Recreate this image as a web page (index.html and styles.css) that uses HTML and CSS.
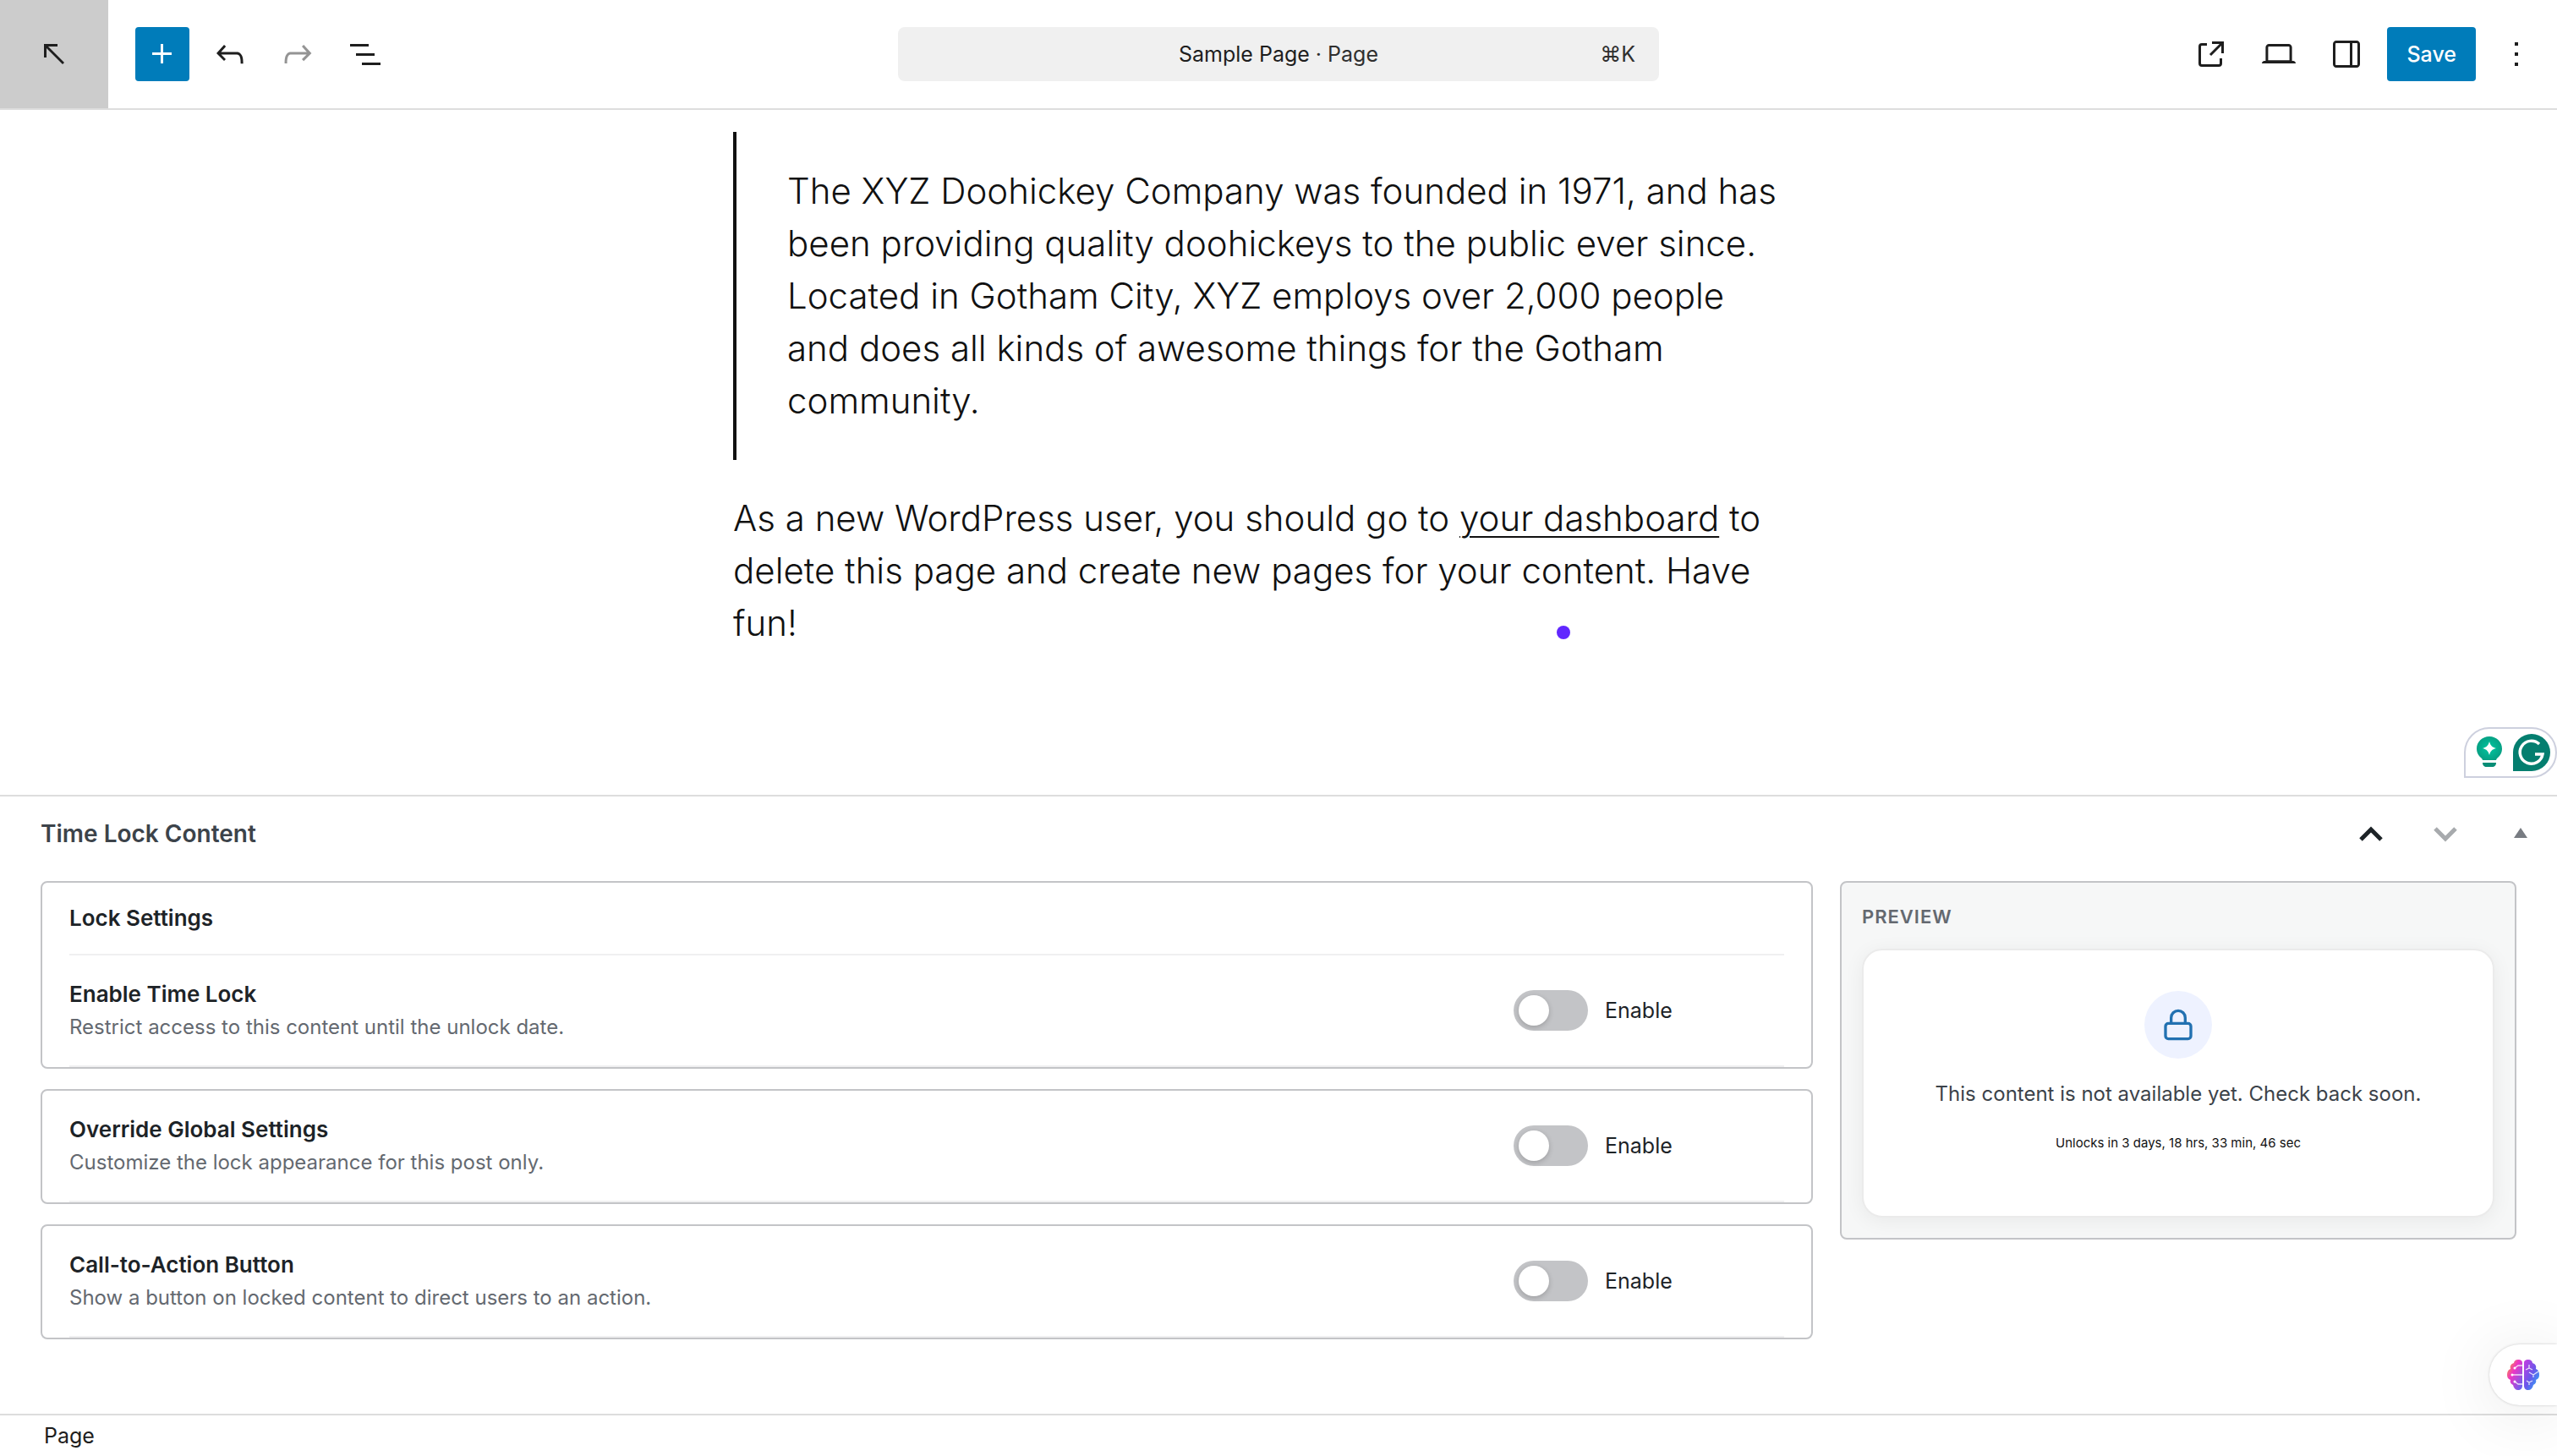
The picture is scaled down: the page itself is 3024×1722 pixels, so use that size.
FILE: index.html
```
<!DOCTYPE html>
<html lang="en">
<head>
  <meta charset="UTF-8">
  <meta name="viewport" content="width=device-width, initial-scale=1">
  <title>Sample Page - Edit Page</title>
  <link rel="stylesheet" href="styles.css">
</head>
<body>
  <!-- Top toolbar -->
  <header class="editor-header">
    <div class="header-left">
      <a href="#" class="back-link" aria-label="View Pages">
        <svg class="icon" viewBox="0 0 24 24"><path d="M14 6H6v8h1.5V8.5L17 18l1-1-9.5-9.5H14V6Z"/></svg>
      </a>
      <div class="tools">
        <button type="button" class="icon-btn inserter" aria-label="Block Inserter">
          <svg class="icon" viewBox="0 0 24 24"><path d="M11 12.5V17.5H12.5V12.5H17.5V11H12.5V6H11V11H6V12.5H11Z"/></svg>
        </button>
        <button type="button" class="icon-btn" aria-label="Undo">
          <svg class="icon" viewBox="0 0 24 24"><path d="M18.3 11.7c-.6-.6-1.4-.9-2.3-.9H6.7l2.9-3.3-1.1-1-4.5 5L8.5 16l1-1-2.7-2.7H16c.5 0 .9.2 1.3.5 1 1 1 3.4 1 4.5v.3h1.5v-.2c0-1.5 0-4.3-1.5-5.7z"/></svg>
        </button>
        <button type="button" class="icon-btn" aria-label="Redo" disabled>
          <svg class="icon" viewBox="0 0 24 24"><path d="M15.6 6.5l-1.1 1 2.9 3.3H8c-.9 0-1.7.3-2.3.9-1.4 1.5-1.4 4.2-1.4 5.6v.2h1.5v-.3c0-1.1 0-3.5 1-4.5.3-.3.7-.5 1.3-.5h9.2L14.5 15l1.1 1.1 4.6-4.6-4.6-5z"/></svg>
        </button>
        <button type="button" class="icon-btn" aria-label="Document Overview">
          <svg class="icon" viewBox="0 0 24 24"><path d="M3 6h11v1.5H3V6Zm3.5 5.5h11V13h-11v-1.5ZM21 17H10v1.5h11V17Z"/></svg>
        </button>
      </div>
    </div>

    <button type="button" class="document-bar">
      <span class="document-title">Sample Page <span class="document-type">· Page</span></span>
      <span class="document-shortcut">⌘K</span>
    </button>

    <div class="header-right">
      <a href="#" class="icon-btn" aria-label="View Page">
        <svg class="icon" viewBox="0 0 24 24"><path d="M19.5 4.5h-7V6h4.44l-5.97 5.97 1.06 1.06L18 7.06v4.44h1.5v-7Zm-13 1a2 2 0 0 0-2 2v10a2 2 0 0 0 2 2h10a2 2 0 0 0 2-2v-3H17v3a.5.5 0 0 1-.5.5h-10a.5.5 0 0 1-.5-.5v-10a.5.5 0 0 1 .5-.5h3V5.5h-3Z"/></svg>
      </a>
      <button type="button" class="icon-btn" aria-label="View">
        <svg class="icon" viewBox="0 0 24 24"><path d="M20.5 16h-.7V8c0-1.1-.9-2-2-2H6.2c-1.1 0-2 .9-2 2v8h-.7c-.8 0-1.5.7-1.5 1.5h20c0-.8-.7-1.5-1.5-1.5zM5.7 8c0-.3.2-.5.5-.5h11.6c.3 0 .5.2.5.5v7.6H5.7V8z"/></svg>
      </button>
      <button type="button" class="icon-btn" aria-label="Settings">
        <svg class="icon" viewBox="0 0 24 24"><path d="M18 4H6c-1.1 0-2 .9-2 2v12c0 1.1.9 2 2 2h12c1.1 0 2-.9 2-2V6c0-1.1-.9-2-2-2zm-4 14.5H6c-.3 0-.5-.2-.5-.5V6c0-.3.2-.5.5-.5h8v13zm4.5-.5c0 .3-.2.5-.5.5h-2.5v-13H18c.3 0 .5.2.5.5v12z"/></svg>
      </button>
      <button type="button" class="save-btn">Save</button>
      <button type="button" class="icon-btn" aria-label="Options">
        <svg class="icon" viewBox="0 0 24 24"><path d="M13 19h-2v-2h2v2zm0-6h-2v-2h2v2zm0-6h-2V5h2v2z"/></svg>
      </button>
    </div>
  </header>

  <!-- Editor canvas -->
  <main class="canvas">
    <article class="post-content">
      <blockquote class="quote">
        The XYZ Doohickey Company was founded in 1971, and has<br>
        been providing quality doohickeys to the public ever since.<br>
        Located in Gotham City, XYZ employs over 2,000 people<br>
        and does all kinds of awesome things for the Gotham<br>
        community.
      </blockquote>
      <p class="paragraph">
        As a new WordPress user, you should go to <a href="#">your dashboard</a> to<br>
        delete this page and create new pages for your content. Have<br>
        fun!
      </p>
      <span class="cursor-dot"></span>
    </article>

    <div class="writing-helper">
      <svg class="helper-bulb" viewBox="0 0 36 40">
        <defs>
          <radialGradient id="bulb" cx="50%" cy="50%" r="50%">
            <stop offset="0" stop-color="#00c6a0"/>
            <stop offset="1" stop-color="#06a184"/>
          </radialGradient>
        </defs>
        <path d="M18 1C9.500 1 3 7.500 3 15.500c0 5 2.500 8.500 5.500 11 1 .8 1.500 2.500 1.500 2.500h16s.5-1.700 1.500-2.500c3-2.500 5.500-6 5.500-11C33 7.500 26.500 1 18 1z" fill="url(#bulb)"/>
        <path d="M18 7c1.500 5 3 6.500 8 8-5 1.500-6.500 3-8 8-1.500-5-3-6.500-8-8 5-1.500 6.500-3 8-8z" fill="#fff"/>
        <path d="M10 32h16c0 3.500-2 5-4.500 5h-7c-2.500 0-4.500-1.500-4.500-5z" fill="#078d76"/>
      </svg>
      <svg class="helper-logo" viewBox="0 0 44 44">
        <path d="M22 0a22 22 0 0 1 0 44H0V22A22 22 0 0 1 22 0z" fill="#047e6f"/>
        <path d="M31 12A13.500 13.500 0 1 0 35 24H26" fill="none" stroke="#fff" stroke-width="3.500"/>
      </svg>
    </div>
  </main>

  <!-- Time Lock meta box -->
  <section class="metabox">
    <div class="metabox-header">
      <h2>Time Lock Content</h2>
      <div class="metabox-actions">
        <button type="button" aria-label="Move up">
          <svg class="chevron" viewBox="0 0 32 32"><path d="M4 23 16 11l12 12"/></svg>
        </button>
        <button type="button" aria-label="Move down" disabled>
          <svg class="chevron" viewBox="0 0 32 32"><path d="M4 10l12 12 12-12"/></svg>
        </button>
        <button type="button" aria-label="Toggle panel">
          <svg class="triangle" viewBox="0 0 32 32"><path d="M9 21 17 9l8 12z"/></svg>
        </button>
      </div>
    </div>

    <div class="metabox-body">
      <div class="settings">
        <div class="card">
          <h3 class="card-title">Lock Settings</h3>
          <div class="setting-row">
            <div class="setting-text">
              <h4>Enable Time Lock</h4>
              <p>Restrict access to this content until the unlock date.</p>
            </div>
            <label class="setting-control">
              <input type="checkbox" class="toggle">
              Enable
            </label>
          </div>
        </div>

        <div class="card">
          <div class="setting-row">
            <div class="setting-text">
              <h4>Override Global Settings</h4>
              <p>Customize the lock appearance for this post only.</p>
            </div>
            <label class="setting-control">
              <input type="checkbox" class="toggle">
              Enable
            </label>
          </div>
        </div>

        <div class="card">
          <div class="setting-row">
            <div class="setting-text">
              <h4>Call-to-Action Button</h4>
              <p>Show a button on locked content to direct users to an action.</p>
            </div>
            <label class="setting-control">
              <input type="checkbox" class="toggle">
              Enable
            </label>
          </div>
        </div>
      </div>

      <aside class="preview">
        <h3>PREVIEW</h3>
        <div class="preview-card">
          <div class="lock-badge">
            <svg viewBox="0 0 24 24"><rect x="3" y="11" width="18" height="11" rx="2"/><path d="M7 11V7a5 5 0 0 1 10 0v4"/></svg>
          </div>
          <p class="preview-message">This content is not available yet. Check back soon.</p>
          <p class="preview-countdown">Unlocks in 3 days, 18 hrs, 33 min, 46 sec</p>
        </div>
      </aside>
    </div>
  </section>

  <footer class="editor-footer">Page</footer>

  <button type="button" class="assistant" aria-label="Open assistant">
    <svg viewBox="0 0 38 36">
      <defs>
        <linearGradient id="brain-left" x1="0" y1="0" x2="1" y2="1">
          <stop offset="0" stop-color="#f9b016"/>
          <stop offset="0.400" stop-color="#ee35c4"/>
          <stop offset="1" stop-color="#5a66f5"/>
        </linearGradient>
        <linearGradient id="brain-right" x1="0" y1="0" x2="1" y2="1">
          <stop offset="0" stop-color="#c93be0"/>
          <stop offset="0.500" stop-color="#6a57ea"/>
          <stop offset="1" stop-color="#22b8fa"/>
        </linearGradient>
      </defs>
      <path d="M18 4c0-3-2-4-5-4S8 2 8 4C5 5 3 7 4 11c-3 1-4 4-4 7s1 5 4 6c-1 3 1 5 3 6 1 4 3 6 6 6s5-2 5-5z" fill="url(#brain-left)"/>
      <path d="M20 4c0-3 2-4 5-4s5 2 5 4c3 1 5 3 4 7 3 1 4 4 4 7s-1 5-4 6c1 3-1 5-3 6-1 4-3 6-6 6s-5-2-5-5z" fill="url(#brain-right)"/>
      <g fill="none" stroke="#fff" stroke-opacity="0.800" stroke-width="1.300">
        <path d="M18 7h-5l-4 3M18 18H6M18 29h-5l-4-3M26 6v4l-4 2M26 10l4 2M26 15l5 3 6-4M31 17v4M23 25l3 2 4-2M26 27v3"/>
      </g>
      <g fill="#fff"><circle cx="9" cy="10" r="1.500"/><circle cx="6" cy="18" r="1.500"/><circle cx="9" cy="26" r="1.500"/></g>
    </svg>
  </button>
</body>
</html>
```

FILE: styles.css
```
* {
  box-sizing: border-box;
}
body {
  position: relative;
  display: flex;
  flex-direction: column;
  min-height: 100vh;
  margin: 0;
  overflow-x: hidden;
  background: #fff;
  color: #1e1e1e;
  font-family: Inter, "Liberation Sans", sans-serif;
  font-size: 25px;
}
h2, h3, h4, p, blockquote {
  margin: 0;
}
button {
  padding: 0;
  border: none;
  background: none;
  color: inherit;
  font: inherit;
  cursor: pointer;
}

/* Header */
.editor-header {
  display: grid;
  grid-template-columns: 1fr minmax(0, 900px) 1fr;
  align-items: center;
  height: 130px;
  border-bottom: 2px solid #ddd;
}
.header-left {
  display: flex;
  align-items: center;
  gap: 32px;
}
.back-link {
  display: flex;
  align-items: center;
  justify-content: center;
  width: 128px;
  height: 128px;
  background: #ccc;
  color: #1e1e1e;
}
.tools {
  display: flex;
  gap: 16px;
}
.icon {
  width: 48px;
  height: 48px;
  fill: currentColor;
}
.icon-btn {
  display: flex;
  align-items: center;
  justify-content: center;
  width: 64px;
  height: 64px;
  border-radius: 4px;
  color: #1e1e1e;
}
.icon-btn:disabled {
  color: #949494;
}
.inserter {
  background: #007cba;
  color: #fff;
}
.document-bar {
  display: grid;
  grid-template-columns: 1fr auto 1fr;
  align-items: center;
  height: 64px;
  padding: 0 28px;
  border-radius: 8px;
  background: #f0f0f0;
}
.document-title {
  grid-column: 2;
}
.document-type {
  color: #2f2f2f;
}
.document-shortcut {
  justify-self: end;
  color: #2f2f2f;
}
.header-right {
  display: flex;
  align-items: center;
  justify-content: flex-end;
  gap: 16px;
  padding-right: 16px;
}
.save-btn {
  height: 64px;
  padding: 0 23px;
  border-radius: 4px;
  background: #007cba;
  color: #fff;
  font-weight: 500;
}

/* Canvas */
.canvas {
  position: relative;
  flex: 1;
  padding: 26px 0 148px;
}
.post-content {
  position: relative;
  max-width: 1290px;
  margin: 0 auto;
  color: #111;
  font-size: 42px;
  font-weight: 300;
  line-height: 62px;
}
.quote {
  padding: 39px 0 39px 60px;
  border-left: 4px solid #111;
}
.paragraph {
  margin-top: 38px;
}
.paragraph a {
  color: inherit;
  text-decoration-thickness: 2px;
  text-underline-offset: 6px;
}
.cursor-dot {
  position: absolute;
  right: 300px;
  bottom: 12px;
  width: 16px;
  height: 16px;
  border-radius: 50%;
  background: #6127ff;
}
.writing-helper {
  position: absolute;
  right: 0;
  bottom: 20px;
  display: flex;
  align-items: center;
  gap: 10px;
  height: 60px;
  padding: 0 6px 0 10px;
  border: 2px solid #cdd0de;
  border-radius: 30px 30px 30px 0;
  background: #fff;
}
.helper-bulb {
  width: 36px;
  height: 40px;
}
.helper-logo {
  width: 44px;
  height: 44px;
}

/* Meta box */
.metabox {
  padding: 0 48px 88px;
  border-top: 2px solid #ddd;
}
.metabox-header {
  display: flex;
  align-items: center;
  justify-content: space-between;
  height: 88px;
  margin-bottom: 12px;
}
.metabox-header h2 {
  color: #3c434a;
  font-size: 28px;
  font-weight: 600;
}
.metabox-actions {
  display: flex;
  gap: 56px;
  margin-right: -20px;
}
.metabox-actions button {
  display: flex;
  color: #1d2327;
}
.metabox-actions button:disabled {
  color: #a7aaad;
}
.chevron, .triangle {
  width: 32px;
  height: 32px;
}
.chevron {
  fill: none;
  stroke: currentColor;
  stroke-width: 5;
}
.triangle {
  fill: #787c82;
}
.metabox-body {
  display: grid;
  grid-template-columns: 1fr 800px;
  align-items: start;
  gap: 32px;
}
.settings {
  display: grid;
  gap: 24px;
}
.card {
  padding: 0 32px;
  border: 2px solid #c3c4c7;
  border-radius: 8px;
  color: #1d2327;
}
.card-title {
  border-bottom: 2px solid #f0f0f1;
  font-size: 26px;
  font-weight: 600;
  line-height: 84px;
}
.setting-row {
  display: flex;
  align-items: center;
  justify-content: space-between;
  padding: 26px 0;
  border-bottom: 2px solid #f0f0f1;
}
.setting-text h4 {
  font-size: 26px;
  font-weight: 600;
  line-height: 40px;
}
.setting-text p {
  color: #646970;
  font-size: 24px;
  line-height: 38px;
}
.setting-control {
  display: flex;
  align-items: center;
  gap: 20px;
  width: 320px;
  cursor: pointer;
}
.toggle {
  display: flex;
  align-items: center;
  width: 88px;
  height: 48px;
  margin: 0;
  padding: 6px;
  border-radius: 24px;
  background: #c3c4c7;
  appearance: none;
}
.toggle::before {
  content: "";
  width: 36px;
  height: 36px;
  border-radius: 50%;
  background: #fff;
  box-shadow: 0 2px 6px rgba(0, 0, 0, 0.2);
}
.toggle:checked {
  justify-content: flex-end;
  background: #2271b1;
}

/* Preview */
.preview {
  padding: 24px;
  border: 2px solid #c3c4c7;
  border-radius: 8px;
  background: #f6f7f7;
}
.preview h3 {
  margin-bottom: 22px;
  color: #646970;
  font-size: 22px;
  font-weight: 600;
  letter-spacing: 1px;
  line-height: 32px;
}
.preview-card {
  display: flex;
  flex-direction: column;
  align-items: center;
  padding: 48px 48px 74px;
  border: 2px solid #ebebeb;
  border-radius: 24px;
  background: #fff;
  box-shadow: 0 4px 24px rgba(0, 0, 0, 0.06);
  text-align: center;
}
.lock-badge {
  display: flex;
  align-items: center;
  justify-content: center;
  width: 80px;
  height: 80px;
  border-radius: 50%;
  background: #eef2ff;
}
.lock-badge svg {
  width: 40px;
  height: 40px;
  fill: none;
  stroke: #2271b1;
  stroke-width: 2;
}
.preview-message {
  margin-top: 22px;
  color: #3c434a;
  font-size: 24px;
  line-height: 40px;
}
.preview-countdown {
  margin-top: 26px;
  color: #111;
  font-size: 15px;
  line-height: 24px;
}

/* Footer */
.editor-footer {
  padding: 0 52px;
  border-top: 2px solid #ddd;
  line-height: 48px;
}

/* Floating assistant button */
.assistant {
  position: absolute;
  right: 0;
  bottom: 60px;
  display: flex;
  align-items: center;
  width: 80px;
  height: 72px;
  padding-left: 21px;
  border-radius: 36px 0 0 36px;
  background: #fff;
  box-shadow: 0 0 3px rgba(0, 0, 0, 0.2), 0 8px 80px rgba(0, 0, 0, 0.1);
}
.assistant svg {
  width: 38px;
  height: 36px;
}
```
